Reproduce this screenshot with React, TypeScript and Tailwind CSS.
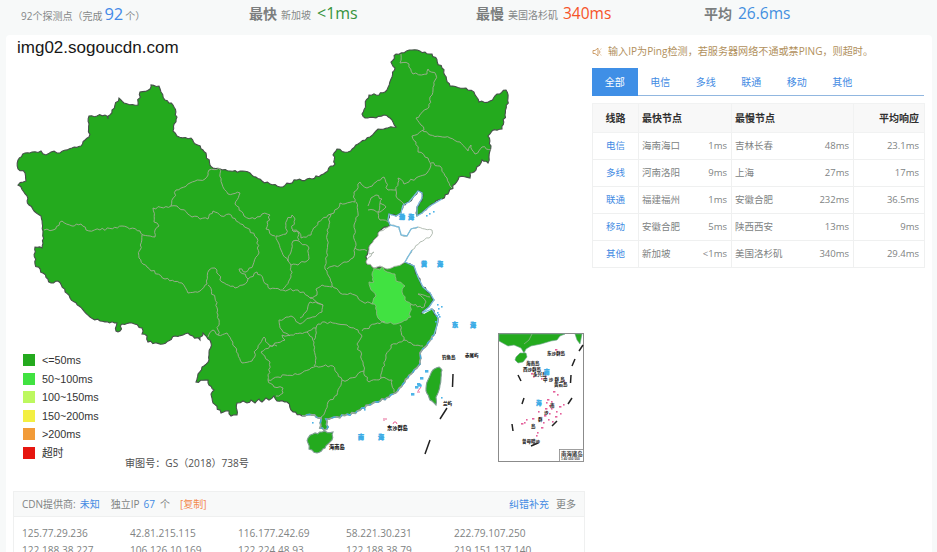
import React from 'react';

const ui = "font-['Open_Sans','Noto_Sans_CJK_SC',sans-serif]";
const arial = "font-['Liberation_Sans','Noto_Sans_CJK_SC',sans-serif]";

const mainland =
  '18,160 25,153 32,152 41,151 46,155 51,152 60,153 72,148 81,146 85,140 89,137 89,116 105,115 108,119 112,110 119,98 124,103 138,105 140,92 150,89 151,85 159,86 161,92 165,100 173,105 177,117 173,131 177,136 191,138 203,150 206,153 210,165 213,168 230,171 250,173 262,181 280,187 297,180 312,179 321,175 335,164 333,155 337,149 348,152 358,144 370,137 378,129 396,127 392,120 384,115 376,118 365,118 362,114 369,95 379,95 387,90 392,77 395,68 391,62 396,54 412,50 425,52 432,54 442,68 450,86 466,88 474,92 479,102 490,101 497,94 506,90 508,98 505,115 502,129 492,131 488,136 491,146 489,157 488,163 482,160 476,170 470,173 470,178 459,177 455,184 448,194 442,199 436,201 430,206 422,213 417,216 417,207 422,198 422,193 418,191 414,196 409,202 403,205 401,213 396,216 389,214 388,220 390,225 380,231 376,238 369,247 366,262 374,268 387,268 405,262 414,266 418,277 423,287 430,293 434,300 429,307 422,313 432,309 438,318 437,325 434,335 427,345 420,353 420,364 413,372 403,384 393,394 378,402 362,408 350,415 337,417 326,419 328,427 324,430 320,428 321,418 312,415 302,416 293,412 287,402 277,401 274,396 269,400 266,398 262,402 259,399 255,403 251,400 247,403 243,401 237,403 237,415 231,416 229,411 221,413 213,403 211,394 214,390 208,383 208,380 196,382 198,374 202,367 209,360 211,343 203,333 200,340 188,333 175,336 163,344 148,342 147,336 142,334 142,328 132,323 122,324 120,331 116,331 117,323 100,321 90,317 70,298 58,281 51,283 35,264 35,247 42,248 43,231 41,216 29,205 27,196 18,185 26,181 25,173 18,169';
const shandong =
  '388,227 380,231 376,238 369,247 369,254 374,252 366,262 374,268 380,266 387,269 397,266 405,262 412,250 420,242 431,236 432,230 418,227 411,229 407,236 401,235 399,227 394,225';
const anhui =
  '374,268 380,270 383,267 387,272 395,274 396,281 405,286 402,292 405,300 411,304 410,312 411,317 402,322 396,324 385,323 378,318 376,306 372,304 376,296 370,287 369,282 374,282 372,275';
const hainan = '308,438 313,434 322,432 333,432 332,440 325,448 317,453 309,449 308,443';
const taiwan = '439,367 442,370 440,385 436,397 436,405 430,400 426,391 428,380 433,370';

const borders = [
  '44,230 53,230 62,221 72,226 81,224 86,230 100,230 122,226 140,231 143,235 155,237 155,230 159,226 154,222 153,208 171,206 176,190 190,183 205,179 209,170 219,168 222,184 228,194 240,193 235,204 244,216 255,219 262,214 270,215 266,229 275,236',
  '142,235 140,250 139,258 147,267 165,279 182,283 188,293 200,291 207,284 209,270 215,268 222,282 235,288 243,285 248,279 239,269 246,272 253,265 259,253 257,238 247,228 229,214 221,216 213,211 208,219 192,217 177,206 171,206',
  '276,236 286,234 287,220 292,215 295,219 292,229 298,232 299,240',
  '276,236 281,250 288,261 291,252 293,241 299,241 309,248 309,259 298,265 291,265 288,261',
  '291,265 291,277 283,289',
  '292,230 299,232 301,238 311,235 318,222 328,215 334,213 340,203 355,202 354,192 360,182 367,188 376,182 384,177 388,190 396,190 398,178 404,184 416,178 427,173 431,165',
  '331,214 327,230 327,250 325,269 332,286 340,293 355,295 363,302 372,304',
  '327,269 340,265 353,258 355,248 354,225 358,213 356,202',
  '355,248 367,251',
  '368,206 371,198 376,195 382,199 380,203 386,207 380,212 374,210 368,210',
  '380,203 378,213 380,220 388,222',
  '396,190 396,196 404,204',
  '248,279 257,272 263,279 270,289 283,290 298,290 308,296 323,305',
  '310,298 317,295 316,289 322,285 332,287',
  '208,285 215,298 218,315 218,335 227,333 235,347 242,363 252,361 256,350 264,337 269,345 277,346',
  '208,337 213,330 218,335',
  '323,305 322,312 310,318 300,324 291,316 279,320 282,330 290,336',
  '261,352 270,346 285,340 282,335 291,335 300,333 307,332 314,342 316,358 314,366',
  '323,305 310,302 306,312 300,318',
  '261,352 270,362 268,380 278,377 285,375 300,374 316,366 333,366 336,372 342,380',
  '268,380 274,387 283,388 283,393 276,396',
  '342,380 337,395 328,402 325,412 321,417',
  '307,332 316,328 318,324 325,322 338,324 347,325 358,330 362,336 357,344 363,362 364,371 348,380 342,380',
  '316,328 314,340',
  '362,331 375,324 385,322',
  '400,325 404,340 391,345 386,358 381,378 369,382 364,371',
  '404,340 413,345 423,346',
  '381,378 392,380 394,392',
  '411,304 422,308 426,302 418,294 430,297',
  '401,54 400,63 409,64 413,74 427,74 428,69 436,75 433,90 429,107 416,118 421,125 424,130 412,136 416,142 418,152 428,158 431,165',
  '422,130 430,135 450,138 460,142 468,151 471,145 475,154 482,147 491,150',
  '431,163 440,166 447,178 452,188',
];

const wobble = (n: number) => {
  const v = Math.sin(n * 12.9898) * 43758.5453;
  return (v - Math.floor(v)) * 2 - 1;
};

// Subdivides each segment and nudges the new vertices so borders look surveyed.
function rough(points: string, closed: boolean, amount: number) {
  const p = points.split(' ').map((s) => s.split(',').map(Number));
  const out: string[] = [];
  const last = closed ? p.length : p.length - 1;
  for (let i = 0; i < last; i++) {
    const [ax, ay] = p[i];
    const [bx, by] = p[(i + 1) % p.length];
    out.push(`${ax} ${ay}`);
    const len = Math.hypot(bx - ax, by - ay);
    const steps = Math.max(1, Math.round(len / 2.6));
    for (let k = 1; k < steps; k++) {
      const t = k / steps;
      const o = wobble(ax * 3 + ay * 7 + k * 5) * amount;
      out.push(`${(ax + (bx - ax) * t - ((by - ay) / len) * o).toFixed(1)} ${(ay + (by - ay) * t + ((bx - ax) / len) * o).toFixed(1)}`);
    }
  }
  if (!closed) out.push(p[p.length - 1].join(' '));
  return 'M' + out.join('L') + (closed ? 'Z' : '');
}

const coast =
  'M442 199L430 206L422 213L417 216M417 216L417 207L422 198L422 193L418 191L414 196L409 202L403 205M403 205L401 213L396 216L389 214L388 220L390 225L399 227L401 235L407 236L411 229L418 227M412 250L405 262L414 266L418 277L423 287L430 293L434 300L429 307L422 313L432 309L438 318L437 325L434 335';
const southCoast = '434,335 427,345 420,353 420,364 413,372 403,384 393,394 378,402 362,408 350,415 337,417 326,419 328,427 324,430 320,428 321,418 312,415 302,416';

const seaNames: [string, number, number][] = [
  ['渤', 399, 219], ['海', 408, 219], ['黄', 421, 266], ['海', 437, 266],
  ['东', 452, 327], ['海', 470, 327], ['南', 358, 439], ['海', 378, 439],
];
const landNames: [string, number, number][] = [
  ['钓鱼岛', 442, 359], ['赤尾屿', 465, 357], ['兰屿', 443, 405], ['东沙群岛', 387, 430], ['海南岛', 329, 449],
];
const islets = [
  [417, 383], [425, 370], [420, 377], [418, 384], [415, 386], [411, 393], [420, 385], [438, 308], [441, 306], [437, 312], [439, 316], [429, 213], [433, 211], [426, 215], [312, 422], [363, 407], [441, 397], [364, 409], [437, 304], [436, 315], [438, 314], [435, 321], [431, 338], [349, 414],
];
const reefs = [
  [553, 391], [557, 394], [546, 402], [549, 405], [551, 408], [546, 411], [544, 415], [549, 413], [556, 411], [559, 406], [563, 404], [560, 413], [555, 416], [548, 419], [543, 422], [541, 427], [537, 432], [539, 417], [532, 418], [526, 419], [524, 422], [521, 423], [551, 401], [538, 411], [545, 408], [552, 421], [536, 435], [547, 399],
  [541, 378], [533, 376], [531, 373], [545, 376], [563, 380], [555, 349], [559, 352], [564, 382],
];
const insetNames: [string, number, number][] = [
  ['东沙群岛', 547, 355], ['海南岛', 526, 365], ['西沙群岛', 523, 370.5], ['永兴岛', 533, 375.8],
  ['中 沙 群 岛', 543, 381], ['黄岩岛', 554, 386.2], ['南', 550, 407], ['沙', 544, 414], ['群', 538, 421], ['岛', 531, 428], ['曾母暗沙', 522, 443],
];

function ChinaMap() {
  return (
    <svg viewBox="6 72 580 386" className={`block h-[386px] w-[580px] -mt-5 overflow-visible ${arial}`}>
      <path d={rough(mainland, true, 1.2)} fill="#24aa1e" stroke="#46504a" strokeWidth="1.1" />
      <path d={rough(southCoast, false, 1.2)} fill="none" stroke="#91a6a0" strokeWidth="1.8" />
      <path d={rough(southCoast, false, 1.2)} fill="none" stroke="#43aadb" strokeWidth="1.3" strokeDasharray="2 6 4 5" />
      <path d="M429 307L422 312L424 314L431 310Z" fill="#fff" />
      <path d={rough(shandong, true, 1)} fill="#fff" stroke="#aab5aa" strokeWidth="0.9" />
      <path d={rough(anhui, true, 1.3)} fill="#41e241" stroke="#96b58b" strokeWidth="0.8" />
      {borders.map((b) => (
        <path key={b} d={rough(b, false, 1.3)} fill="none" stroke="#9cad90" strokeWidth="0.95" />
      ))}
      <path d={coast} fill="none" stroke="#7bbcdc" strokeWidth="1.3" />
      <path d={rough(hainan, true, 0.9)} fill="#24aa1e" stroke="#7d9e91" strokeWidth="1.1" />
      <path d={rough(taiwan, true, 0.7)} fill="#24aa1e" stroke="#7d9e91" strokeWidth="1.1" />
      {islets.map(([x, y], i) => (
        <rect key={i} x={x} y={y} width={i < 6 ? 3.4 : 1.6} height={i < 6 ? 2.6 : 1.6} fill="#4db4e8" />
      ))}
      {seaNames.map(([t, x, y], i) => (
        <text key={i} x={x} y={y} fontSize="6" fontWeight="900" fill="#38abe6" stroke="#38abe6" strokeWidth="0.5">{t}</text>
      ))}
      {landNames.map(([t, x, y]) => (
        <text key={t} x={x} y={y} fontSize={t.length > 3 || t === '海南岛' ? 5.2 : 4.5} fontWeight="900" fill="#222">{t}</text>
      ))}
      <g fill="none" stroke="#e4578c" strokeWidth="0.9">
        <path d="M384 418v3M385 419h2M393 424l1-2 2 0 1 2M418 391l3-4M417 392h3" />
      </g>
      <path d="M453 374L452.500 387M447 408L440 419M430 440L425 454" stroke="#222" strokeWidth="1.5" />
      <g>
        <rect x="498.500" y="333.500" width="85" height="128" fill="#fff" stroke="#8b8b8b" />
        <path d="M499 334H565L560 336L557 340L551 341L541 344L531 346L526 349L524 353L521 348L514 345L508 346L499 341Z" fill="#24aa1e" stroke="#70a491" strokeWidth="0.6" />
        <path d="M532 334L529 340L524 344" fill="none" stroke="#9cb89a" strokeWidth="0.7" />
        <path d="M516 357L520 353L526 353L527 357L523 362L518 363L515 360Z" fill="#24aa1e" stroke="#70a491" strokeWidth="0.6" />
        <path d="M575 334H582L580 344L577 340Z" fill="#24aa1e" stroke="#70a491" strokeWidth="0.6" />
        <path d="M583 345L579 351M575 359L572 366M571 375L570.500 383M572 398L568 404M557 421L552 426M518 375L521 381M524 398L522 404M512 424L513 431M531 446L538 443" stroke="#222" strokeWidth="1.5" />
        {reefs.map(([x, y], i) => (
          <rect key={i} x={x} y={y} width={i % 3 ? 1.6 : 2.4} height="1.6" fill="#e4609b" />
        ))}
        {insetNames.map(([t, x, y]) => (
          <text key={t} x={x} y={y} fontSize="4.500" fontWeight="900" fill="#2b2b2b">{t}</text>
        ))}
        <text x="544" y="374" fontSize="5.500" fontWeight="900" fill="#38abe6" stroke="#38abe6" strokeWidth="0.4">南</text>
        <text x="536" y="405" fontSize="5.500" fontWeight="900" fill="#38abe6" stroke="#38abe6" strokeWidth="0.4">海</text>
        <rect x="559.500" y="449.500" width="24" height="12" fill="#fff" stroke="#888" strokeWidth="0.8" />
        <text x="561" y="455.500" fontSize="5.400" fontWeight="700" fill="#333">南海诸岛</text>
        <text x="561" y="460" fontSize="3.200" fontWeight="700" fill="#444">1:40 000 000</text>
      </g>
    </svg>
  );
}

const legend = [
  { color: 'bg-[#24aa1e]', label: '<=50ms' },
  { color: 'bg-[#41e241]', label: '50~100ms' },
  { color: 'bg-[#bdf85f]', label: '100~150ms' },
  { color: 'bg-[#f3ef42]', label: '150~200ms' },
  { color: 'bg-[#f29b38]', label: '>200ms' },
  { color: 'bg-[#e61610]', label: '超时' },
];

const tabs = ['全部', '电信', '多线', '联通', '移动', '其他'];
const rows = [
  ['电信', '海南海口', '1ms', '吉林长春', '48ms', '23.1ms'],
  ['多线', '河南洛阳', '9ms', '上海', '27ms', '17ms'],
  ['联通', '福建福州', '1ms', '安徽合肥', '232ms', '36.5ms'],
  ['移动', '安徽合肥', '5ms', '陕西西安', '13ms', '9ms'],
  ['其他', '新加坡', '<1ms', '美国洛杉矶', '340ms', '29.4ms'],
];
const ips = [
  '125.77.29.236', '42.81.215.115', '116.177.242.69', '58.221.30.231', '222.79.107.250',
  '122.188.38.227', '106.126.10.169', '122.224.48.93', '122.188.38.79', '219.151.137.140',
];

function Summary() {
  return (
    <header className="grid h-[35px] grid-cols-[228px_227px_228px_1fr] pl-[21px] text-[10px] text-[#858888]">
      <div className="flex h-[27px] items-baseline whitespace-pre leading-[27px]">
        <span>92个探测点（完成</span>
        <span className="ml-[2px] text-[16.500px] text-[#4389e8]">92</span>
        <span className="ml-[2px]">个）</span>
      </div>
      <div className="flex h-[27px] items-baseline leading-[27px]">
        <b className="text-[14px] text-[#7b7e7e]">最快</b>
        <span className="ml-1">新加坡</span>
        <span className="ml-[6px] text-[16px] text-[#36933c]">&lt;1ms</span>
      </div>
      <div className="flex h-[27px] items-baseline leading-[27px]">
        <b className="text-[14px] text-[#7b7e7e]">最慢</b>
        <span className="ml-1">美国洛杉矶</span>
        <span className="ml-[5px] text-[15.500px] text-[#f65327]">340ms</span>
      </div>
      <div className="flex h-[27px] items-baseline leading-[27px]">
        <b className="text-[14px] text-[#7b7e7e]">平均</b>
        <span className="ml-[6px] text-[15.500px] text-[#438fe0]">26.6ms</span>
      </div>
    </header>
  );
}

function MapPanel() {
  return (
    <section className="relative h-[456px]">
      <h1 className={`h-[57px] pl-[11px] pt-[1px] text-[17px] leading-[23px] text-[#171717] ${arial}`}>img02.sogoucdn.com</h1>
      <ChinaMap />
      <ul className={`absolute left-[17px] top-[316px] text-[10.800px] text-[#333] ${arial}`}>
        {legend.map((l) => (
          <li key={l.label} className="flex h-[18.500px] items-center gap-[7px]">
            <i className={`h-3 w-3 ${l.color}`} />
            <span>{l.label}</span>
          </li>
        ))}
      </ul>
      <p className="absolute left-[119px] top-[420px] text-[10.100px] leading-4 text-[#505050]">审图号：GS（2018）738号</p>
    </section>
  );
}

function IpPanel() {
  return (
    <section className="ml-[7px] h-[100px] w-[572px] border border-[#eff0f0] text-[10px] text-[#808383]">
      <div className="flex h-[25px] items-center border-b border-[#eff0f0] bg-[#f8f9f9] px-2">
        <span>CDN提供商:</span>
        <a className="ml-1 text-[#438be3]">未知</a>
        <span className="ml-[11px]">独立IP</span>
        <span className="ml-1 text-[#438be3]">67</span>
        <span className="ml-[5px]">个</span>
        <a className="ml-[10px] text-[#f38a4d]">[复制]</a>
        <a className="ml-auto text-[#438be3]">纠错补充</a>
        <a className="ml-[7px]">更多</a>
      </div>
      <div className="grid auto-rows-[17px] grid-cols-[repeat(5,108px)] pl-2 pt-[8px] text-[10.100px] leading-[17px]">
        {ips.map((ip) => <span key={ip}>{ip}</span>)}
      </div>
    </section>
  );
}

function Results() {
  return (
    <aside className="w-[332px] pt-[9px]">
      <p className="flex h-[16px] items-center gap-[6px] whitespace-nowrap text-[10.100px] text-[#b1905c]">
        <svg viewBox="0 0 10 10" className="h-[10px] w-[10px] shrink-0" fill="none" stroke="#c48b4c" strokeWidth="0.8">
          <path d="M1 3.500H3L6 1.200V8.800L3 6.500H1ZM7.500 3.500Q8.300 5 7.500 6.500M8.500 2.300L9.300 1.800M8.500 7.700L9.300 8.200" />
        </svg>
        <span>输入IP为Ping检测，若服务器网络不通或禁PING，则超时。</span>
      </p>
      <nav className="mt-2 flex h-[28px] border-b border-[#91b7e0] text-[10px]">
        {tabs.map((t, i) => (
          <a key={t} className={`flex h-[28px] w-[45.500px] items-center justify-center ${i ? 'text-[#438be3]' : 'bg-[#3f8fe6] text-white'}`}>{t}</a>
        ))}
      </nav>
      <table className="mt-[7px] w-[332px] table-fixed border-collapse text-[9.500px] text-[#808383]">
        <colgroup>
          <col className="w-[46px]" />
          <col className="w-[93px]" />
          <col className="w-[122px]" />
          <col className="w-[71px]" />
        </colgroup>
        <thead className="bg-[#f8f8f8] text-[10px] text-[#303030]">
          <tr className="h-[29px]">
            <th className="border border-[#f1f2f2] p-0 text-center">线路</th>
            <th className="border border-[#f1f2f2] py-0 pl-[3px] text-left">最快节点</th>
            <th className="border border-[#f1f2f2] py-0 pl-[3px] text-left">最慢节点</th>
            <th className="border border-[#f1f2f2] py-0 pr-[5px] text-right">平均响应</th>
          </tr>
        </thead>
        <tbody>
          {rows.map(([line, fast, fastMs, slow, slowMs, avg]) => (
            <tr key={line} className="h-[27px]">
              <td className="border border-[#eff0f0] p-0 text-center text-[#438be3]">{line}</td>
              <td className="border border-[#eff0f0] py-0 pl-[3px] pr-1"><div className="flex justify-between"><span>{fast}</span><span>{fastMs}</span></div></td>
              <td className="border border-[#eff0f0] py-0 pl-[3px] pr-1"><div className="flex justify-between"><span>{slow}</span><span>{slowMs}</span></div></td>
              <td className="border border-[#eff0f0] py-0 pr-[5px] text-right">{avg}</td>
            </tr>
          ))}
        </tbody>
      </table>
    </aside>
  );
}

export default function App() {
  return (
    <div className={`h-[552px] w-[937px] overflow-hidden bg-[#f7f9f9] ${ui}`}>
      <Summary />
      <main className="ml-[6px] flex h-[517px] w-[926px] rounded-t bg-white">
        <div className="w-[586px]">
          <MapPanel />
          <IpPanel />
        </div>
        <Results />
      </main>
    </div>
  );
}
